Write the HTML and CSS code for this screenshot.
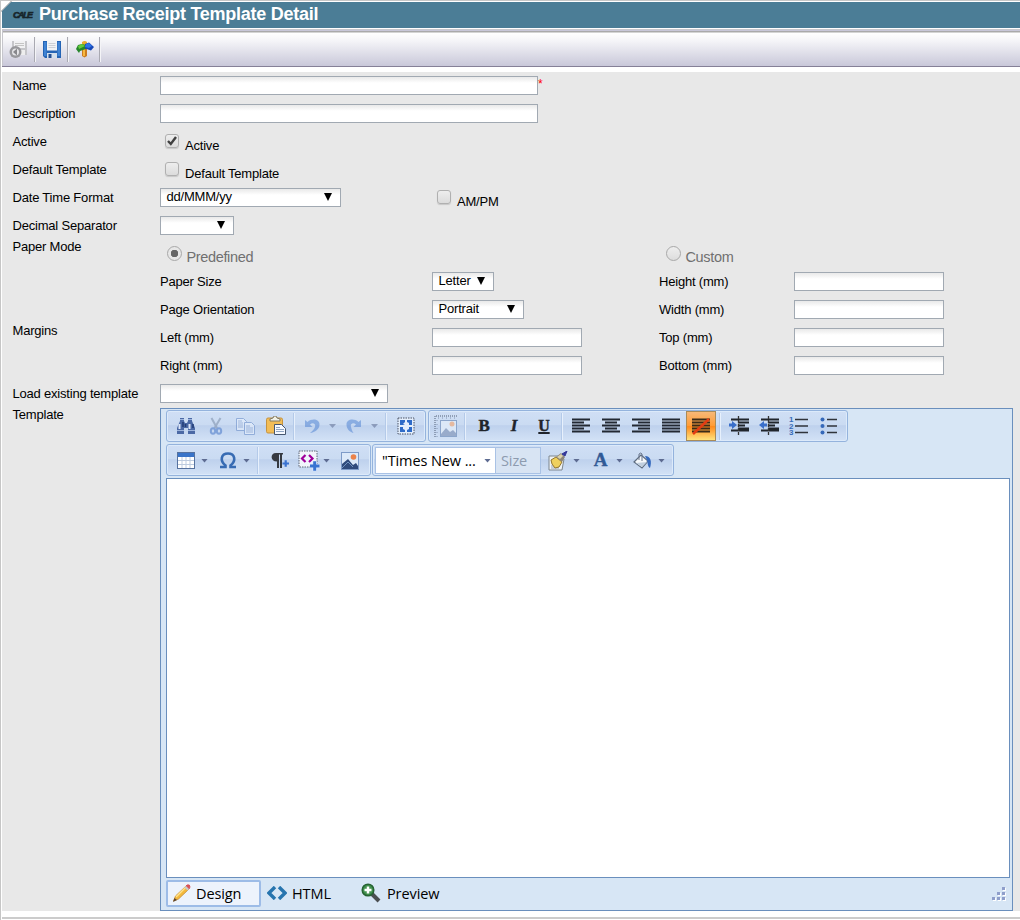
FILE: index.html
```html
<!DOCTYPE html>
<html lang="en">
<head>
<meta charset="utf-8">
<title>Purchase Receipt Template Detail</title>
<link rel="stylesheet" href="styles.css">
</head>
<body>
<div class="page">
<header class="title"><span class="logo">CALE</span><h1>Purchase Receipt Template Detail</h1></header>
<nav class="actions">
<span class="act"><svg width="20" height="20" viewBox="0 0 20 20"><path d="M3 2h15v14H3z" fill="#c6c6ca"/><path d="M5 2h11v7H5z" fill="#f1f1f3"/><path d="M6 4.500h9M6 6.500h9" stroke="#c4c4c4"/><path d="M11 11h5v5h-5z" fill="#eee"/><circle cx="6.500" cy="13" r="6" fill="#98989c"/><circle cx="6.500" cy="13" r="3.500" fill="#e5e5e8"/><path d="M8 9.500v7L4 13z" fill="#88888c"/></svg></span>
<span class="act"><svg width="20" height="20" viewBox="0 0 20 20"><path d="M1 2h18v17H3l-2-2z" fill="#2463b4"/><path d="M2 3h2.500v14H2zM15.500 3H18v14h-2.500z" fill="#3f83d4"/><path d="M5 1.500h10v10H5z" fill="#f1f3f5"/><path d="M6.500 4.500h7M6.500 6.500h7M6.500 8.500h7" stroke="#cdd0d5"/><path d="M5 14h10v5H5z" fill="#d3dfec"/><path d="M6.500 15h3v4h-3z" fill="#234f94"/></svg></span>
<span class="act"><svg width="20" height="20" viewBox="0 0 20 20"><path d="M7 8h5v9l-2.500 1.500L7 17z" fill="#cb7d20"/><path d="M9 9v8" stroke="#f8b940" stroke-width="2"/><path d="M7 3q3-2 5 0v5H7z" fill="#e9ac2e"/><path d="M7 5l4 1v4L5 12l-1 2-3-4 2-4z" fill="#25852b"/><path d="M3 7l4-2 3 2-6 3z" fill="#65cc3d"/><path d="M10 5l4-1.500L19 8l-3 3.500-6-2z" fill="#1748b6"/><path d="M11 5l3-1 3 3-3 2-4-1z" fill="#2f74e8"/></svg></span>
</nav>
<main class="body">
<div class="form">
<div class="row"><label>Name</label><div class="c2"><i class="box w378"></i><b class="req">*</b></div></div>
<div class="row"><label>Description</label><div class="c2"><i class="box w378"></i></div></div>
<div class="row"><label>Active</label><div class="c2"><span class="check"><i class="tick"><svg width="14" height="14" viewBox="0 0 14 14"><path d="M3 7l2.800 3 5.200-7" fill="none" stroke="#404040" stroke-width="2.400"/></svg></i>Active</span></div></div>
<div class="row"><label>Default Template</label><div class="c2"><span class="check"><i class="tick"></i>Default Template</span></div></div>
<div class="row"><label>Date Time Format</label><div class="c2"><span class="box sel w181">dd/MMM/yy<i class="tri"></i></span></div><div class="c3"><span class="check"><i class="tick"></i>AM/PM</span></div></div>
<div class="row"><label>Decimal Separator</label><div class="c2"><span class="box sel w74"><i class="tri"></i></span></div></div>
<div class="row"><label class="high">Paper Mode</label><div class="c2"><span class="radio"><i class="dot on"></i>Predefined</span></div><div class="c3"></div><div class="c4"><span class="radio"><i class="dot"></i>Custom</span></div></div>
<div class="row"><label></label><div class="c2">Paper Size</div><div class="c3"><span class="box sel w62">Letter<i class="tri"></i></span></div><div class="c4">Height (mm)</div><div class="c5"><i class="box w150"></i></div></div>
<div class="row"><label></label><div class="c2">Page Orientation</div><div class="c3"><span class="box sel w92">Portrait<i class="tri"></i></span></div><div class="c4">Width (mm)</div><div class="c5"><i class="box w150"></i></div></div>
<div class="row"><label class="high">Margins</label><div class="c2">Left (mm)</div><div class="c3"><i class="box w150"></i></div><div class="c4">Top (mm)</div><div class="c5"><i class="box w150"></i></div></div>
<div class="row"><label></label><div class="c2">Right (mm)</div><div class="c3"><i class="box w150"></i></div><div class="c4">Bottom (mm)</div><div class="c5"><i class="box w150"></i></div></div>
<div class="row"><label>Load existing template</label><div class="c2"><span class="box sel w228"><i class="tri"></i></span></div></div>
</div>
<div class="template"><label class="high">Template</label>
<section class="editor">
<div class="bars">
<div class="bar find">
<span class="btn"><svg width="20" height="20" viewBox="0 0 20 20"><path d="M4 2h4v3l1 2h2l1-2V2h4v3l3 7v6h-7v-6H8v6H1v-6l3-7z" fill="#4b69a5"/><path d="M3.500 8v5M13.500 8v5" stroke="#dbe6f8" stroke-width="2"/><path d="M4 3.500h4M12 3.500h4M1 14.500h7M12 14.500h7" stroke="#9db4dc"/><path d="M7 6v5M17 8v4M9.500 8v3" stroke="#223d76" stroke-width="1.500"/></svg></span>
<span class="btn faded"><svg width="20" height="20" viewBox="0 0 20 20"><path d="M5.500 2l6 11M14.500 2L8 13" stroke="#7487a2" stroke-width="2"/><g fill="none" stroke="#3d6fc5" stroke-width="2"><ellipse cx="7" cy="15" rx="2.200" ry="2.800"/><ellipse cx="13" cy="15" rx="2.200" ry="2.800"/></g></svg></span>
<span class="btn faded"><svg width="20" height="20" viewBox="0 0 20 20"><g fill="#eef5ff" stroke="#5a81c2"><path d="M.5 2.500h7l3 3v9H.5z"/><path d="M8.500 6.500h7l3 3v9h-10z"/></g><path d="M2 5h4M2 7h5M2 9h5M2 11h5M10 10h4M10 12h7M10 14h7M10 16h7" stroke="#7795c9"/></svg></span>
<span class="btn"><svg width="22" height="20" viewBox="0 0 22 20"><rect x="1.500" y="2" width="16" height="15" rx="1.500" fill="#f2bd57" stroke="#c6933f"/><path d="M5 5V3l3-1 1-2h2l1 2 3 1v2z" fill="#f1f0e4" stroke="#807a64"/><path d="M9.500 8.500h7l4 4v6h-11z" fill="#f6f9ff" stroke="#46566e"/><path d="M11 11.500h4M11 13.500h8M11 15.500h8" stroke="#8fa5c2"/></svg></span>
<i class="sep s6"></i>
<span class="btn faded"><svg width="18" height="18" viewBox="0 0 18 18"><path d="M2 3v7h7.500L7 7.500c3-2.500 6-.5 5 2.500-.6 2-2.500 4-5 6 5-.5 9.500-4 9.500-8.500C16.500 2 9 1 4.500 5z" fill="#4a7fd2"/></svg></span><i class="down d12 pale"></i>
<span class="btn faded"><svg width="18" height="18" viewBox="0 0 18 18"><path d="M16 3v7H8.500L11 7.500C8 5 5 7 6 10c.6 2 1 4 2.500 6C4.500 15 1.500 11.500 1.500 7.500 1.500 2 9 1 13.500 5z" fill="#4a7fd2"/></svg></span><i class="down d12 pale"></i>
<i class="sep s10"></i>
<span class="btn"><svg width="18" height="18" viewBox="0 0 18 18"><rect x="1" y="1" width="16" height="16" fill="#e3eefc" stroke="#4a5265" stroke-dasharray="1.500 1"/><path d="M3 3h5v2L6 7l2 1H3zM10 3h5v5h-3V6l-2-1zM3 10h3v2l2 1v2H3zM15 10v5h-5v-2l2-1v-2z" fill="#2e6bc8"/></svg></span>
</div>
<div class="bar formatting">
<span class="btn lift"><svg width="24" height="24" viewBox="0 0 24 24"><path d="M1 22V1h23" fill="none" stroke="#526078" stroke-dasharray="1 1"/><path d="M3 22V3h21" fill="none" stroke="#8396b4" stroke-dasharray="1 3"/><rect x="6.500" y="5.500" width="16" height="16" fill="#dce8f7" stroke="#8ba5cb"/><path d="M7 21v-2l5-6 4 4 3-2 3 3v3z" fill="#98abcb"/><circle cx="18" cy="9" r="2.500" fill="#e5b9a0"/></svg></span>
<i class="sep s8"></i>
<span class="btn letter">B</span><span class="btn letter it">I</span><span class="btn letter un">U</span>
<i class="sep s7"></i>
<span class="btn"><svg width="18" height="16" viewBox="0 0 18 16"><path d="M0 1.500h18M0 4.500h12M0 7.500h18M0 10.500h12M0 13.500h18" stroke="#222832" stroke-width="1.800"/></svg></span>
<span class="btn"><svg width="18" height="16" viewBox="0 0 18 16"><path d="M0 1.500h18M3 4.500h12M0 7.500h18M3 10.500h12M0 13.500h18" stroke="#222832" stroke-width="1.800"/></svg></span>
<span class="btn"><svg width="18" height="16" viewBox="0 0 18 16"><path d="M0 1.500h18M6 4.500h12M0 7.500h18M6 10.500h12M0 13.500h18" stroke="#222832" stroke-width="1.800"/></svg></span>
<span class="btn"><svg width="18" height="16" viewBox="0 0 18 16"><path d="M0 1.500h18M0 4.500h18M0 7.500h18M0 10.500h18M0 13.500h18" stroke="#222832" stroke-width="1.800"/></svg></span>
<span class="btn active"><svg width="18" height="18" viewBox="0 0 18 18"><path d="M0 2.500h18M0 5.500h18M0 8.500h18M0 11.500h18M0 14.500h18" stroke="#3b2b18" stroke-width="1.800"/><path d="M1 17L17 2" stroke="#e43c12" stroke-width="2.500"/></svg></span>
<i class="sep s8"></i>
<span class="btn"><svg width="20" height="20" viewBox="0 0 20 20"><path d="M2 3.500h18M9 6.500h11M9 9.500h7M9 12.500h11M2 14.500h18" stroke="#20252c" stroke-width="1.800"/><path d="M9.500 0v20" stroke="#333" stroke-width="1.300" stroke-dasharray="3 1"/><path d="M0 7.500h3V5l5 4-5 4v-2.500H0z" fill="#3a6fca"/></svg></span>
<span class="btn"><svg width="20" height="20" viewBox="0 0 20 20"><path d="M2 3.500h18M9 6.500h11M9 9.500h7M9 12.500h11M2 14.500h18" stroke="#20252c" stroke-width="1.800"/><path d="M9.500 0v20" stroke="#333" stroke-width="1.300" stroke-dasharray="3 1"/><path d="M8 7.500H5V5L0 9l5 4v-2.500h3z" fill="#3a6fca"/></svg></span>
<span class="btn"><svg width="20" height="22" viewBox="0 0 20 22"><g class="nums"><text x="0" y="7">1</text><text x="0" y="13.500">2</text><text x="0" y="20">3</text></g><path d="M6 4.500h13M6 11h13M6 17.500h13" stroke="#30343b" stroke-width="1.600"/></svg></span>
<span class="btn"><svg width="20" height="20" viewBox="0 0 20 20"><path d="M8 3.500h10M8 10h10M8 16.500h10" stroke="#30343b" stroke-width="1.600"/><g fill="#3568b9"><circle cx="3.500" cy="3.500" r="2"/><circle cx="3.500" cy="10" r="2"/><circle cx="3.500" cy="16.500" r="2"/></g></svg></span>
</div>
</div>
<div class="bars second">
<div class="bar insert">
<span class="btn"><svg width="18" height="17" viewBox="0 0 18 17"><rect x=".5" y=".5" width="17" height="16" fill="#fff" stroke="#56729f"/><path d="M1 1h16v4H1z" fill="#3974c9"/><path d="M5 5v11M9 5v11M13 5v11M1 8.500h16M1 12.500h16" stroke="#bdcbdf"/></svg></span><i class="down d8"></i>
<span class="btn g4"><svg width="18" height="17" viewBox="0 0 18 17"><path d="M1 15h5.500v-1.500C.5 9 2 1.500 9 1.500s8.500 7.500 2.500 12V15H17" fill="none" stroke="#376bb3" stroke-width="2.600"/></svg></span><i class="down d8"></i>
<i class="sep s14"></i>
<span class="btn"><svg width="20" height="18" viewBox="0 0 20 18"><path d="M7 9.500C0 9.500 0 1 6 1h7v1.500h-1V16h-2V2.500H9V16H7z" fill="#363a41"/><path d="M12.500 11.500h6.500M15.700 8.300v6.400" stroke="#3b73d0" stroke-width="2.200"/></svg></span>
<span class="btn w28"><svg width="22" height="22" viewBox="0 0 22 22"><rect x="1" y="1" width="18" height="16" fill="#f1f5fc" stroke="#5e6674" stroke-dasharray="1.500 1"/><path d="M7.500 5L4 8.500 7.500 12M11 5l3.500 3.500L11 12" fill="none" stroke="#a0009a" stroke-width="2.200"/><path d="M12 16h9.500M16.700 11.200v9.600" stroke="#dfeaff" stroke-width="4.500"/><path d="M12 16h9.500M16.700 11.200v9.600" stroke="#3874d1" stroke-width="3"/></svg></span><i class="down d8"></i>
<span class="btn g4"><svg width="20" height="20" viewBox="0 0 20 20"><rect x="1.500" y="1.500" width="17" height="17" fill="#dce9f9" stroke="#7e9bc8"/><path d="M2 18v-5l6-5 5 6 3-2 2 3v3z" fill="#304b7c"/><path d="M2 17l6-6 5 5" fill="none" stroke="#7192be"/><circle cx="13.500" cy="6" r="2.800" fill="#eb824a"/></svg></span>
</div>
<div class="bar fontbar">
<span class="family">"Times New ...<i class="down"></i></span><span class="size">Size</span>
<span class="btn brush"><svg width="22" height="20" viewBox="0 0 22 20"><path d="M2 5h11l4 3-2 11H2z" fill="#eef2f5" stroke="#7d868f"/><path d="M4 15h8M4 17h8" stroke="#9da7b6"/><path d="M4 9l5-3 6 5-3 5-4 1-3-4z" fill="#efd05d" stroke="#94762d"/><path d="M9 6l5-4 4 4-3 5z" fill="#8d8678"/><path d="M10 6l4-3 2 2-3 3z" fill="#ddd3aa"/><path d="M15 3l5-3-2 5z" fill="#343899" stroke="#343899"/></svg></span><i class="down d8"></i>
<span class="btn letter blue">A</span><i class="down d8"></i>
<span class="btn g4"><svg width="20" height="18" viewBox="0 0 20 18"><path d="M8 3l7 6-6 7-8-6z" fill="#f5f8fb" stroke="#5d6c80" stroke-width="1.200"/><path d="M6 8V2q2-2 3 0v7" fill="none" stroke="#69758a"/><path d="M3 11l11-1-5 5z" fill="#c1cfdf"/><path d="M12 4c6 0 7 6 5 12-3-2-2-6-3-8z" fill="#3569bd"/></svg></span><i class="down d8"></i>
</div>
</div>
<div class="canvas"></div>
<footer class="modes">
<span class="mode on"><svg width="20" height="20" viewBox="0 0 20 20"><path d="M1.500 18l2-5L14 3l3 3L6.500 16z" fill="#f3b93d" stroke="#c18a35" stroke-width=".8"/><path d="M4 14L14 4" stroke="#ffe38c" stroke-width="1.500"/><path d="M14 3l1-1q3-1 3 2l-1 2z" fill="#d95458" stroke="#d95458"/><path d="M12.500 4.500L14 3l3 3-1.500 1.500z" fill="#c7cccf"/><path d="M1 19l1.500-4L5 17z" fill="#5f4630"/></svg>Design</span>
<span class="mode html"><svg width="20" height="14" viewBox="0 0 20 14"><path d="M8 1L2 7l6 6M12 1l6 6-6 6" fill="none" stroke="#2674ae" stroke-width="3.400"/></svg>HTML</span>
<span class="mode preview"><svg width="20" height="20" viewBox="0 0 20 20"><path d="M11 11l7 7" stroke="#4b4f51" stroke-width="4"/><circle cx="7" cy="7" r="5.800" fill="#40914d" stroke="#266333" stroke-width="1.500"/><path d="M3.500 7h7M7 3.500v7" stroke="#fff" stroke-width="2.500"/></svg>Preview</span>
<svg class="grip" width="14" height="14" viewBox="0 0 14 14"><path d="M11 1h3v3h-3zM6 6h3v3H6zM11 6h3v3h-3zM1 11h3v3H1zM6 11h3v3H6zM11 11h3v3h-3z" fill="#fff"/><path d="M10 0h3v3h-3zM5 5h3v3H5zM10 5h3v3h-3zM0 10h3v3H0zM5 10h3v3H5zM10 10h3v3h-3z" fill="#8f9fcb"/></svg>
</footer>
</section></div>
</main>
<div class="bottom"></div>
</div>
</body>
</html>
```
FILE: styles.css
```css
* { box-sizing: border-box; }
body { margin: 0; background: #fff; font-family: "Liberation Sans", Arial, sans-serif; font-size: 13px; letter-spacing: -.2px; color: #000; overflow: hidden; }
i { font-style: normal; display: block; flex: none; }
svg { display: block; flex: none; }
.page { height: 920px; border-left: 1px solid #c6c6c6; border-top: 1px solid #c6c6c6; padding: 1px 0 0 1px; background: linear-gradient(135deg, #fff 0 7px, #c6c6c6 7px 8px, #fff 8px); }
.title { height: 26px; background: #4b7d96; clip-path: polygon(9px 0, 100% 0, 100% 100%, 0 100%, 0 9px); display: flex; align-items: center; color: #fff; }
.logo { width: 26px; margin-left: 11px; color: #17252b; font: italic 900 9px/24px "Liberation Sans", sans-serif; letter-spacing: -1.500px; -webkit-text-stroke: .6px #17252b; }
h1 { margin: -3px 0 0; font-size: 18px; line-height: 24px; letter-spacing: -.27px; white-space: nowrap; }
.actions { height: 38px; margin-top: 1px; border-top: 1px solid #c8c8cc; border-bottom: 1px solid #858097; background: linear-gradient(#aaa 0 1px, #fff 2px, #f6f6f9 25%, #c7c6d8); background-position: 0 1px; background-clip: padding-box; box-shadow: inset 1px 0 #c6c6cc; display: flex; padding-top: 7px; }
.act { width: 32.500px; height: 25px; border-right: 1px solid #a9a9b2; box-shadow: 1px 0 #f4f4f7; padding: 2px 0 0 7px; }
.act:first-child { width: 33px; }
.body { margin-top: 5px; height: 839px; background: #e8e8e8; padding-left: 10px; }
.row { height: 28px; display: flex; line-height: 19px; padding-top: 4px; }
label { width: 147.500px; margin-left: .5px; flex: none; white-space: nowrap; }
.high { line-height: 13px; margin-top: -4px; }
.c2 { width: 272px; white-space: nowrap; display: flex; }
.row > .c2:last-child { width: 400px; }
.c3 { width: 227px; }
.c4 { width: 135px; }
.box { height: 19px; border: 1px solid #a1a9b2; background: linear-gradient(#e9e9e9, #fff 6px); }
.w378 { width: 378px; } .w181 { width: 181px; } .w74 { width: 74px; } .w62 { width: 62px; } .w92 { width: 92px; } .w150 { width: 150px; } .w228 { width: 228px; }
.req { color: #f00; font-weight: normal; line-height: 16px; font-size: 12px; }
.sel { display: flex; padding: 0 8px 0 5.500px; line-height: 16px; justify-content: space-between; }
.tri { width: 8px; height: 8px; margin: 4px 0 0 auto; background: #000; clip-path: polygon(0 0, 100% 0, 50% 100%); }
.check { display: flex; padding-left: 5px; line-height: 27px; }
.tick { width: 14px; height: 14px; margin: 2px 6px 0 0; border: 1px solid #b0b0b0; border-radius: 3px; background: linear-gradient(#eee, #dcdcdc); box-shadow: 0 1px 1px #c8c8c8; }
.tick svg { margin: -1px; }
.radio { display: flex; padding-left: 7px; margin-top: 1px; line-height: 24px; color: #707070; font-size: 14.500px; letter-spacing: -.35px; }
.dot { width: 15px; height: 15px; margin: 1px 4.500px 0 0; border: 1px solid #a8a8a8; border-radius: 50%; background: linear-gradient(#eee, #ddd); }
.dot.on { background: radial-gradient(circle, #666 0 3.500px, #e7e7e7 4px); }
.template { display: flex; }
.template .high { margin-top: 0; }
.editor { width: 853px; height: 503px; border: 1px solid #6a8fbd; background: #d7e6f5; padding: 1px 2px 0 5px; font-family: "Open Sans", sans-serif; }
.bars { display: flex; height: 32px; gap: 2px; }
.second { margin-top: 2px; gap: 1px; }
.bar { height: 32px; border: 1px solid #94b3dd; border-radius: 3px; box-shadow: inset 0 0 0 1px #dceafa; background: linear-gradient(#d0dff5, #cadbf2 46%, #bed1ed 49%, #d3e2f6); display: flex; align-items: center; }
.second .bar { padding-top: 1px; }
.find { width: 260px; padding-left: 4px; }
.formatting { width: 420px; padding-left: 2px; }
.insert { width: 205px; padding-left: 4px; }
.fontbar { width: 302px; padding-left: 2px; }
.btn { width: 30px; height: 30px; display: flex; align-items: center; justify-content: center; flex: none; }
.w28 { width: 28px; } .g4 { margin-left: 4px; }
.faded { opacity: .5; } .lift { padding-top: 1px; }
.sep { height: 27px; background: linear-gradient(90deg, transparent calc(50% - 1px), #b4cae9 0 50%, #e7f0fc 0 calc(50% + 1px), transparent 0); }
.s6 { width: 6px; } .s7 { width: 7px; } .s8 { width: 8px; } .s10 { width: 10px; } .s14 { width: 14px; }
.down { width: 7px; height: 4px; background: #5d6b91; clip-path: polygon(0 0, 100% 0, 50% 100%); }
.d12 { margin: 0 3px 0 2px; } .d8 { margin-right: 1px; } .pale { opacity: .55; }
.letter { font: bold 17px/28px "Liberation Serif", serif; color: #20242b; -webkit-text-stroke: .4px; padding-bottom: 1px; }
.it { font-style: italic; } .un { text-decoration: underline; text-decoration-thickness: 2px; text-underline-offset: 1px; font-size: 16px; }
.active { border: 1px solid #a98b58; background: linear-gradient(#f7b877, #ff9d38 48%, #ff8b1d 52%, #ffe37e); }
.nums { font: bold 8px "Liberation Sans", sans-serif; fill: #376bb8; }
.family, .size { height: 27px; font-size: 14.500px; line-height: 26px; letter-spacing: -.1px; border: 1px solid #a9c2e5; white-space: nowrap; display: flex; align-items: center; }
.family { width: 121px; background: #fff; padding: 0 4px 0 6px; justify-content: space-between; }
.size { width: 45px; padding-left: 5px; color: #8d9baf; background: #d8e4f3; border-left: 0; }
.brush { margin-left: 2px; }
.blue { color: #315a96; font-size: 19px; margin-left: 4px; width: 31px; }
.canvas { height: 400px; width: 844px; background: #fff; border: 1px solid #6a8fbd; margin-top: 2px; }
.modes { display: flex; height: 32px; padding-top: 2px; font-size: 14.500px; letter-spacing: -.1px; }
.mode { height: 27px; display: flex; align-items: center; gap: 4px; padding: 0 0 1px 6px; white-space: nowrap; }
.mode.on { width: 95px; border: 2px solid #9dbce7; background: #edf3fc; border-radius: 2px; padding-left: 4px; }
.mode.html { width: 94px; gap: 5px; } .mode.preview { width: 100px; gap: 6px; }
.grip { margin: 7px 4px 0 auto; }
.bottom { height: 8px; border-bottom: 2px solid #ccc; }
```
